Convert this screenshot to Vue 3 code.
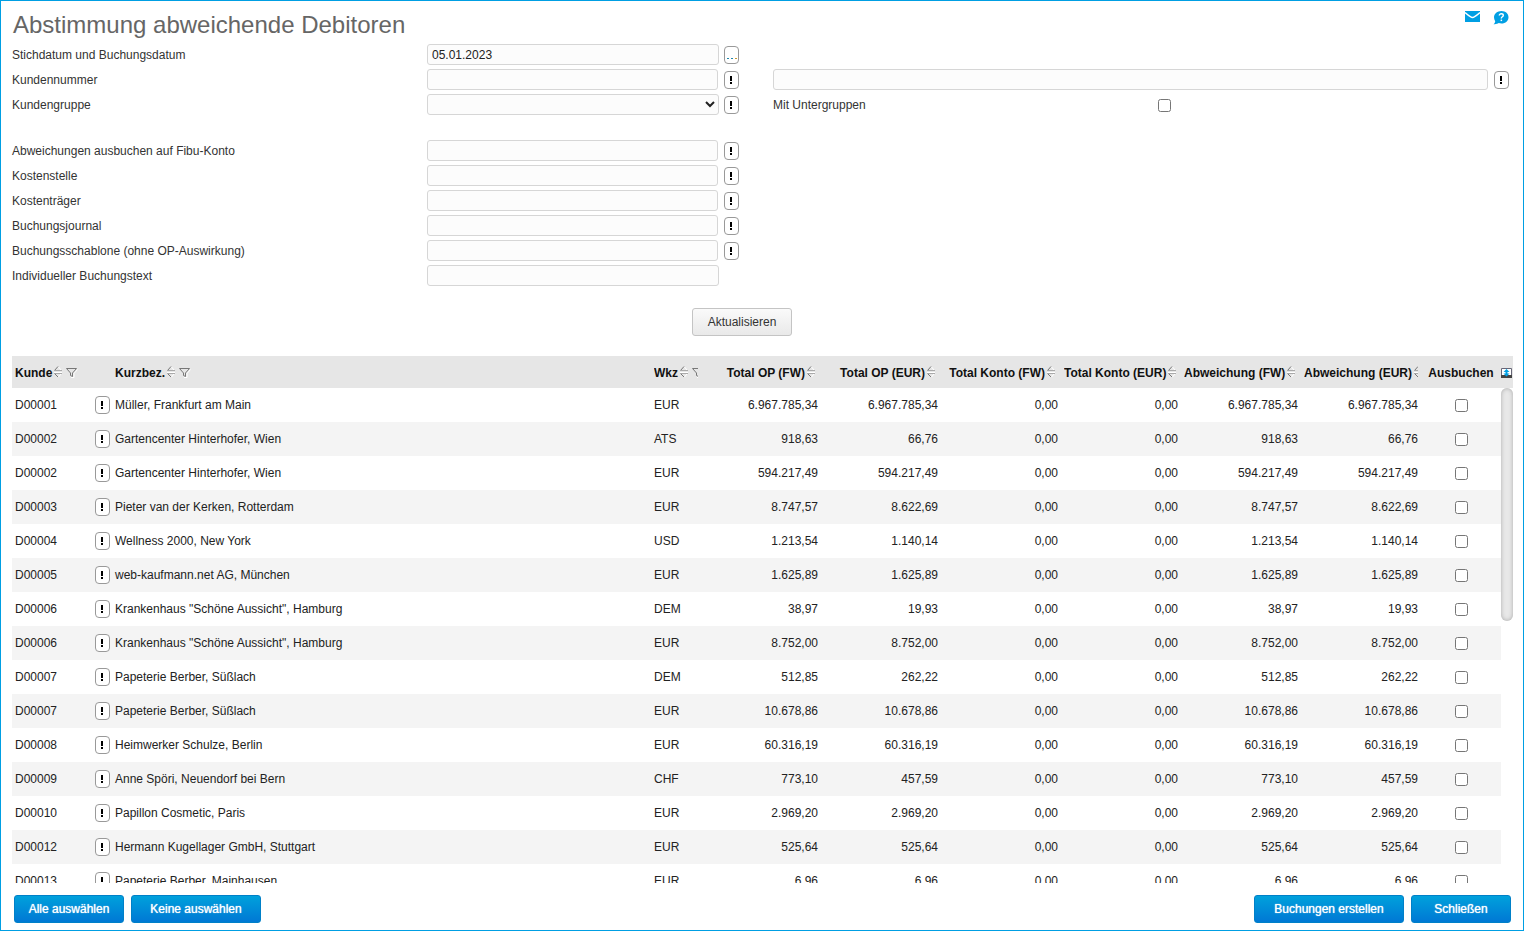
<script setup>
import { ref, reactive } from 'vue'

const date = ref('05.01.2023')
const group = ref('')
const postingFields = [
  { id: 'konto', label: 'Abweichungen ausbuchen auf Fibu-Konto', info: true },
  { id: 'stelle', label: 'Kostenstelle', info: true },
  { id: 'traeger', label: 'Kostenträger', info: true },
  { id: 'journal', label: 'Buchungsjournal', info: true },
  { id: 'schablone', label: 'Buchungsschablone (ohne OP-Auswirkung)', info: true },
  { id: 'text', label: 'Individueller Buchungstext', info: false },
]

const sumHeads = [
  'Total OP (FW)',
  'Total OP (EUR)',
  'Total Konto (FW)',
  'Total Konto (EUR)',
  'Abweichung (FW)',
  'Abweichung (EUR)',
]

const rows = reactive(
  [
    ['D00001', 'Müller, Frankfurt am Main', 'EUR', '6.967.785,34', '6.967.785,34'],
    ['D00002', 'Gartencenter Hinterhofer, Wien', 'ATS', '918,63', '66,76'],
    ['D00002', 'Gartencenter Hinterhofer, Wien', 'EUR', '594.217,49', '594.217,49'],
    ['D00003', 'Pieter van der Kerken, Rotterdam', 'EUR', '8.747,57', '8.622,69'],
    ['D00004', 'Wellness 2000, New York', 'USD', '1.213,54', '1.140,14'],
    ['D00005', 'web-kaufmann.net AG, München', 'EUR', '1.625,89', '1.625,89'],
    ['D00006', 'Krankenhaus "Schöne Aussicht", Hamburg', 'DEM', '38,97', '19,93'],
    ['D00006', 'Krankenhaus "Schöne Aussicht", Hamburg', 'EUR', '8.752,00', '8.752,00'],
    ['D00007', 'Papeterie Berber, Süßlach', 'DEM', '512,85', '262,22'],
    ['D00007', 'Papeterie Berber, Süßlach', 'EUR', '10.678,86', '10.678,86'],
    ['D00008', 'Heimwerker Schulze, Berlin', 'EUR', '60.316,19', '60.316,19'],
    ['D00009', 'Anne Spöri, Neuendorf bei Bern', 'CHF', '773,10', '457,59'],
    ['D00010', 'Papillon Cosmetic, Paris', 'EUR', '2.969,20', '2.969,20'],
    ['D00012', 'Hermann Kugellager GmbH, Stuttgart', 'EUR', '525,64', '525,64'],
    ['D00013', 'Papeterie Berber, Mainhausen', 'EUR', '6,96', '6,96'],
  ].map(([id, name, cur, fw, eur]) => ({
    id, name, cur, sums: [fw, eur, '0,00', '0,00', fw, eur], checked: false,
  }))
)

const setAll = (v) => rows.forEach((r) => { r.checked = v })
</script>

<template>
  <main class="page">
    <header class="top">
      <h1>Abstimmung abweichende Debitoren</h1>
      <nav class="tools">
        <a href="#" aria-label="E-Mail">
          <svg width="15" height="11" viewBox="0 0 15 11">
            <path d="M0 0h15v11H0z" fill="#009fe3" />
            <path d="M0 1.500C4 5 6 6.500 7.500 6.500S11 5 15 1.500" fill="none" stroke="#fff" stroke-width="1.500" />
          </svg>
        </a>
        <a href="#" aria-label="Hilfe">
          <svg width="16" height="14" viewBox="0 0 16 14">
            <path d="M8.500 0C12.600 0 15.500 2.800 15.500 6.300S12.600 12.600 8.500 12.600c-1 0-2-.2-2.800-.5C4.500 13 2.800 13.500.5 13.200c1-.8 1.500-1.700 1.700-3C1.400 9.100 1 7.800 1 6.300 1 2.800 4.400 0 8.500 0z" fill="#009fe3" />
            <path d="M6.300 4.500c0-2.300 4-2.200 4 0C10.300 5.800 8.300 5.800 8.300 7.400" fill="none" stroke="#fff" stroke-width="1.400" />
            <path d="M7.600 8.600h1.500v1.500H7.600z" fill="#fff" />
          </svg>
        </a>
      </nav>
    </header>

    <form class="form" @submit.prevent>
      <div class="half">
        <div class="line">
          <label for="datum">Stichdatum und Buchungsdatum</label>
          <input id="datum" v-model="date" class="box long" type="text" />
          <button type="button" class="info dots" aria-label="Kalender"><i></i><i></i><i></i></button>
        </div>
        <div class="line">
          <label for="nummer">Kundennummer</label>
          <input id="nummer" class="box" type="text" />
          <button type="button" class="info" aria-label="Info"><span class="mark"></span></button>
        </div>
        <div class="line">
          <label for="gruppe">Kundengruppe</label>
          <select id="gruppe" v-model="group" class="box long"><option value=""></option></select>
          <button type="button" class="info" aria-label="Info"><span class="mark"></span></button>
        </div>
      </div>
      <div class="half right">
        <div class="line">
          <input class="box" type="text" aria-label="Kundenname" />
          <button type="button" class="info" aria-label="Info"><span class="mark"></span></button>
        </div>
        <div class="line">
          <label for="unter">Mit Untergruppen</label>
          <input id="unter" class="tick" type="checkbox" />
        </div>
      </div>
      <div class="half posting">
        <div v-for="f in postingFields" :key="f.id" class="line">
          <label :for="f.id">{{ f.label }}</label>
          <input :id="f.id" class="box" :class="{ long: !f.info }" type="text" />
          <button v-if="f.info" type="button" class="info" aria-label="Info"><span class="mark"></span></button>
          <span v-else class="blank"></span>
        </div>
      </div>
    </form>

    <div class="refresh"><button type="button" class="btn plain">Aktualisieren</button></div>

    <section class="list">
      <div class="scroll">
        <table>
          <colgroup>
            <col class="c-id" /><col /><col class="c-cur" />
            <col v-for="h in sumHeads" :key="h" class="c-sum" />
            <col class="c-tick" /><col class="c-end" />
          </colgroup>
          <thead>
            <tr>
              <th v-for="(h, i) in ['Kunde', 'Kurzbez.', 'Wkz', ...sumHeads]" :key="h">
                <div class="head" :class="{ num: i > 2 }">
                  <span>{{ h }}</span>
                  <svg class="sort" width="8" height="12" viewBox="0 0 8 12">
                    <path d="M4.500 1L7.500 4.500M7.500 7.500L4.500 11M0 6.500h8" fill="none" stroke="#fff" />
                    <path d="M4 .5L.5 4.500M.5 7.500L4 11" fill="none" stroke="#777" />
                    <path d="M0 4.500h8M0 7.500h8" fill="none" stroke="#aaa" />
                  </svg>
                  <svg v-if="i < 3" class="filter" width="12" height="10" viewBox="0 0 12 10">
                    <path d="M11.500 1.500L8 5.500V9.500H5" fill="none" stroke="#fff" />
                    <path d="M.5 .5h10L6.500 5V8.500L4.500 7.500V5z" fill="none" stroke="#777" />
                  </svg>
                </div>
              </th>
              <th class="mid">Ausbuchen</th>
              <th class="end">
                <svg width="11" height="10" viewBox="0 0 11 10">
                  <path d="M.5 .5h10v8H.5z" fill="#fff" stroke="#667" />
                  <path d="M0 7h11v3H0z" fill="#444" />
                  <path d="M5.500 1L8.500 4H6.500V5.500H8.500L5.500 8.500 2.500 5.500H4.500V4H2.500z" fill="#009fe3" />
                </svg>
              </th>
            </tr>
          </thead>
          <tbody>
            <tr v-for="(r, i) in rows" :key="i">
              <td>
                <div class="ident">{{ r.id }}<button type="button" class="info" aria-label="Info"><span class="mark"></span></button></div>
              </td>
              <td>{{ r.name }}</td>
              <td>{{ r.cur }}</td>
              <td v-for="(s, j) in r.sums" :key="j" class="num">{{ s }}</td>
              <td class="mid"><input v-model="r.checked" class="tick" type="checkbox" :aria-label="'Ausbuchen ' + r.id" /></td>
              <td class="gutter"></td>
            </tr>
          </tbody>
        </table>
      </div>
      <div class="thumb"></div>
    </section>

    <footer class="foot">
      <button type="button" class="btn w110" @click="setAll(true)">Alle auswählen</button>
      <button type="button" class="btn w130" @click="setAll(false)">Keine auswählen</button>
      <button type="button" class="btn w150 push">Buchungen erstellen</button>
      <button type="button" class="btn w100">Schließen</button>
    </footer>
  </main>
</template>

<style>
html, body, #app { height: 100%; }
body { overflow: hidden; }
</style>

<style scoped>
* { box-sizing: border-box; }
.page {
  height: 100%;
  display: flex;
  flex-direction: column;
  border: 1px solid #009fe3;
  padding: 8px 10px 7px 11px;
  background: #fff;
  color: #333;
  font: 12px/16px "Liberation Sans", Arial, sans-serif;
}
button, input, select { font: inherit; margin: 0; padding: 0; color: #222; }
.top { display: flex; justify-content: space-between; height: 33px; padding: 0 4px 0 1px; }
h1 { margin: 0; font-size: 24px; line-height: 32px; font-weight: 400; color: #666; }
.tools { display: flex; gap: 13px; padding-top: 2px; }
.tools a { display: block; height: 16px; }
.tools svg { display: block; }
.form { display: grid; grid-template-columns: 1fr 1fr; column-gap: 24px; padding-right: 3px; }
.half { padding-right: 10px; }
.right { padding: 25px 1px 0 0; }
.posting { padding-top: 21px; }
.line { display: flex; align-items: center; height: 25px; }
.line label { width: 415px; flex: none; }
.right .line label { width: 385px; }
.box {
  flex: 1;
  min-width: 0;
  height: 21px;
  border: 1px solid #d6d6d6;
  border-radius: 3px;
  background: #fcfcfc;
  padding: 0 4px;
  margin-right: 6px;
}
.long { margin-right: 5px; }
.info {
  flex: none;
  display: flex;
  align-items: center;
  justify-content: center;
  width: 15px;
  height: 18px;
  padding-right: 1px;
  border: 1px solid #999;
  border-radius: 4px;
  background: #fff;
}
.mark {
  width: 2px;
  height: 8px;
  background: linear-gradient(#000 0 5px, transparent 5px 6px, #000 6px);
}
.dots { gap: 2px; align-items: flex-end; padding: 0 0 4px; }
.dots i { width: 2px; height: 1px; background: #28a; }
.dots i:last-child { background: #c93; }
.blank { width: 15px; flex: none; }
.tick { width: 13px; height: 13px; }
.line .tick { margin-top: 1px; }
.refresh { display: flex; justify-content: center; padding: 20px 41px 20px 0; }
.btn {
  height: 28px;
  border: 1px solid #0080c8;
  border-radius: 3px;
  background: linear-gradient(#00a1dc, #0078d4);
  color: #fff;
  text-shadow: 0 0 1px #fff;
}
.plain {
  width: 100px;
  border-color: #c4c4c4;
  background: linear-gradient(#fafafa, #e9e9e9);
  color: #333;
  text-shadow: none;
}
.list { position: relative; flex: 1; min-height: 0; }
.scroll { height: 100%; overflow: auto; scrollbar-width: none; }
table { width: 100%; table-layout: fixed; border-spacing: 0; color: #222; }
.c-id { width: 100px; }
.c-cur { width: 50px; }
.c-sum { width: 120px; }
.c-tick { width: 80px; }
.c-end { width: 12px; }
th {
  position: sticky;
  top: 0;
  z-index: 1;
  height: 32px;
  padding: 2px 3px 0;
  background: #e6e6e6;
  color: #111;
  text-align: left;
  white-space: nowrap;
}
.head { display: flex; align-items: center; overflow: hidden; }
.head span { flex: none; padding-right: 2px; }
.head.num { justify-content: safe flex-end; padding-right: 3px; }
.head svg { flex: none; margin-bottom: 2px; }
.head .filter { margin: 0 0 1px 4px; }
.end { padding: 2px 0 0; }
.end svg { display: block; }
td { height: 34px; padding: 0 3px; white-space: nowrap; }
tbody tr:nth-child(even) td:not(.gutter) { background: #f4f4f4; }
.num { text-align: right; }
.mid { text-align: center; }
td .tick { display: block; margin: 1px auto 0; }
td.gutter { padding: 0; }
.ident { display: flex; align-items: center; justify-content: space-between; margin-right: -1px; }
.thumb {
  position: absolute;
  z-index: 2;
  top: 32px;
  right: 0;
  width: 12px;
  height: 233px;
  border-radius: 6px;
  background: #e8e8e8;
  box-shadow: inset 0 0 4px #aaa;
}
.foot { display: flex; gap: 7px; padding: 12px 2px 0; }
.push { margin-left: auto; }
.w100 { width: 100px; }
.w110 { width: 110px; }
.w130 { width: 130px; }
.w150 { width: 150px; }
</style>
